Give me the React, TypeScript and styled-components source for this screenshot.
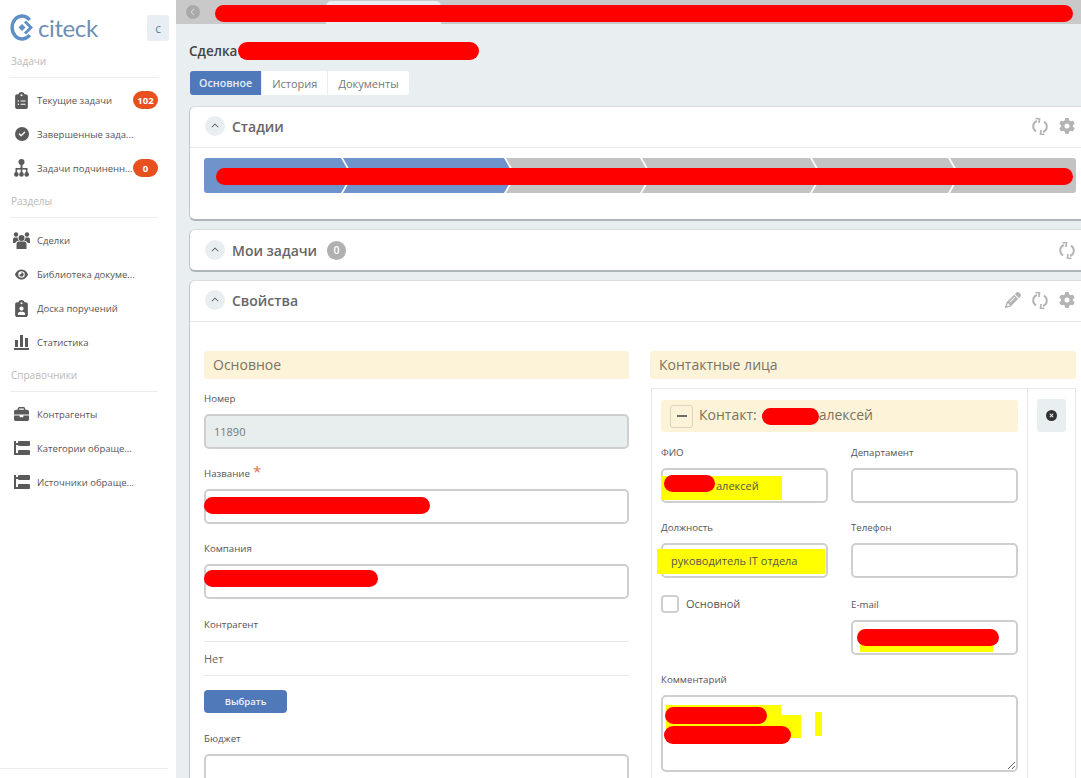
import React from 'react';
import styled, { createGlobalStyle } from 'styled-components';
import {
  FaBriefcase,
  FaCircleCheck,
  FaChevronLeft,
  FaChevronUp,
  FaClipboardList,
  FaClipboardUser,
  FaEye,
  FaGear,
  FaPencil,
  FaCircleXmark,
} from 'react-icons/fa6';

const GlobalStyle = createGlobalStyle`
  html, body {
    margin: 0;
    padding: 0;
    height: 100%;
    overflow: hidden;
    background: #fff;
    font-family: "Open Sans", "Noto Sans", sans-serif;
  }
  * { box-sizing: border-box; }
`;

const LOGO_BLUE = '#5f8fc8';

const StatsIcon = () => (
  <svg width="15" height="16" viewBox="0 0 15 16" fill="#5a5a5a">
    <rect x="1" y="6" width="3" height="7" />
    <rect x="6" y="1" width="3" height="12" />
    <rect x="11" y="4" width="3" height="9" />
    <rect x="0" y="14" width="15" height="2" />
  </svg>
);

const TreeIcon = () => (
  <svg width="16" height="14" viewBox="0 0 16 14" fill="#5a5a5a">
    <rect x="0" y="0" width="2" height="14" />
    <rect x="0" y="2" width="5" height="2" />
    <rect x="0" y="12" width="5" height="2" />
    <rect x="4" y="0" width="12" height="5" rx="1" />
    <rect x="4" y="9" width="12" height="5" rx="1" />
  </svg>
);

const TreeOrgIcon = () => (
  <svg width="15" height="18" viewBox="0 0 15 18" fill="#5a5a5a">
    <circle cx="7.5" cy="3" r="3" />
    <rect x="6.5" y="5" width="2" height="5" />
    <rect x="2" y="9" width="11" height="1.6" />
    <rect x="1.5" y="9" width="1.6" height="5" />
    <rect x="6.7" y="9" width="1.6" height="5" />
    <rect x="11.9" y="9" width="1.6" height="5" />
    <circle cx="2.3" cy="15.4" r="2.3" />
    <circle cx="7.5" cy="15.4" r="2.3" />
    <circle cx="12.7" cy="15.4" r="2.3" />
  </svg>
);

const GroupIcon = () => (
  <svg width="17" height="17" viewBox="0 0 17 17" fill="#5a5a5a">
    <circle cx="8.5" cy="6" r="3" />
    <path d="M3.5 17 V12 C3.5 10 5 9.5 6.5 9.5 H10.5 C12 9.5 13.5 10 13.5 12 V17 Z" />
    <circle cx="3" cy="2.5" r="2.2" />
    <circle cx="14" cy="2.5" r="2.2" />
    <path d="M0 11 V7.5 C0 6 1 5.5 2 5.5 H4.5 C4.7 7 5.2 8 6 8.6 C3.8 9 2.6 9.8 2.5 11 Z" />
    <path d="M17 11 V7.5 C17 6 16 5.5 15 5.5 H12.5 C12.3 7 11.8 8 11 8.6 C13.2 9 14.4 9.8 14.5 11 Z" />
  </svg>
);

const RefreshIcon = () => (
  <svg width="16" height="19" viewBox="0 0 16 19" fill="none" stroke="#b4b4b4" strokeWidth="2">
    <path d="M5 4 C2.5 5 1.2 7 1.2 9.5 C1.2 11.5 2.2 13.2 4 14.5" />
    <path d="M11 15 C13.5 14 14.8 12 14.8 9.5 C14.8 7.5 13.8 5.8 12 4.5" />
    <path d="M3.5 1.5 L7.5 2 L7 6" strokeWidth="1.7" />
    <path d="M12.5 17.5 L8.5 17 L9 13" strokeWidth="1.7" />
  </svg>
);

const Logo = () => (
  <svg width="23" height="27" viewBox="0 0 23 27" fill="none">
    <path d="M19.7 6 A10 11.5 0 1 0 19.7 21" stroke={LOGO_BLUE} strokeWidth="3.4" />
    <path d="M15 7.5 L21 13.5 L15 19.5" stroke={LOGO_BLUE} strokeWidth="3" />
    <path d="M12 10 L15.5 13.5 L12 17 L8.5 13.5 Z" fill={LOGO_BLUE} />
  </svg>
);

const Page = styled.div`
  display: flex;
  width: 1081px;
  height: 778px;
  overflow: hidden;
`;

const Sidebar = styled.aside`
  position: relative;
  flex: 0 0 176px;
  width: 176px;
  min-width: 0;
  padding: 14px 18px 0 10px;
  background: #fff;
`;

const LogoRow = styled.div`
  position: relative;
  display: flex;
  align-items: center;
  gap: 5px;
  height: 27px;
  margin-bottom: 12px;
`;

const LogoText = styled.span`
  font-family: "Lato", "Open Sans", sans-serif;
  font-size: 24px;
  line-height: 27px;
  color: #6f8eb2;
  letter-spacing: -0.4px;
`;

const CollapseButton = styled.div`
  position: absolute;
  top: 1px;
  right: -11px;
  width: 22px;
  height: 26px;
  display: flex;
  align-items: center;
  justify-content: center;
  border-radius: 3px;
  background: #e9eef4;
  color: #6f8299;
  font-size: 12px;
`;

const SectionTitle = styled.div`
  height: 25px;
  margin-top: 8px;
  padding-bottom: 8px;
  padding-left: 1px;
  border-bottom: 1px solid #ececec;
  color: #b9b9b9;
  font-size: 10px;
  line-height: 16px;
`;

const NavList = styled.nav`
  margin-top: 5px;
`;

const NavItem = styled.div`
  display: flex;
  align-items: center;
  height: 34px;
  color: #555;
  font-size: 9.5px;
`;

const NavIcon = styled.span<{ $size: number }>`
  flex: 0 0 27px;
  display: flex;
  align-items: center;
  justify-content: center;
  padding-right: 4px;
  color: #5a5a5a;
  font-size: ${(p) => p.$size}px;
`;

const NavLabel = styled.span`
  flex: 1;
  min-width: 0;
  white-space: nowrap;
`;

const CountBadge = styled.span`
  flex: 0 0 25px;
  display: flex;
  align-items: center;
  justify-content: center;
  height: 18px;
  border-radius: 9px;
  background: #e8501f;
  color: #fff;
  font-size: 9.5px;
  font-weight: 700;
`;

const SidebarFooter = styled.div`
  position: absolute;
  left: 0;
  right: 8px;
  bottom: 9px;
  border-top: 1px solid #ececec;
`;

const Main = styled.main`
  flex: 1;
  min-width: 0;
  background: #e9eef0;
  overflow: hidden;
`;

const TopBar = styled.div`
  position: relative;
  height: 24px;
  background: #c9c9c9;
`;

const ActiveTab = styled.div`
  position: absolute;
  left: 150px;
  top: 1px;
  width: 115px;
  height: 23px;
  border-radius: 5px 5px 0 0;
  background: #e9eef0;
`;

const BackButton = styled.div`
  position: absolute;
  left: 10px;
  top: 5px;
  width: 14px;
  height: 14px;
  display: flex;
  align-items: center;
  justify-content: center;
  border-radius: 50%;
  background: #a9a9a9;
  color: #d8d8d8;
  font-size: 8px;
`;

const Redaction = styled.span<{ $left: number; $top: number; $width: number; $height?: number }>`
  position: absolute;
  z-index: 3;
  left: ${(p) => p.$left}px;
  top: ${(p) => p.$top}px;
  width: ${(p) => p.$width}px;
  height: ${(p) => p.$height ?? 17}px;
  border-radius: 9px;
  background: #ff0000;
`;

const Marker = styled.span<{ $left: number; $top: number; $width: number; $height: number }>`
  position: absolute;
  z-index: 0;
  left: ${(p) => p.$left}px;
  top: ${(p) => p.$top}px;
  width: ${(p) => p.$width}px;
  height: ${(p) => p.$height}px;
  background: #ffff00;
`;

const Content = styled.div`
  margin-right: -8px;
  padding-left: 13px;
`;

const DealTitle = styled.h1`
  position: relative;
  height: 20px;
  margin: 17px 0 0;
  color: #444;
  font-size: 13.5px;
  font-weight: 600;
  line-height: 20px;
`;

const Tabs = styled.div`
  display: flex;
  height: 24px;
  margin: 10px 0 11px 1px;
`;

const Tab = styled.div<{ $active?: boolean }>`
  display: flex;
  align-items: center;
  justify-content: center;
  height: 100%;
  padding: 0 10px;
  margin-right: 1px;
  background: ${(p) => (p.$active ? '#4f79b9' : '#fff')};
  color: ${(p) => (p.$active ? '#e6edf7' : '#777')};
  font-size: ${(p) => (p.$active ? 10.7 : 11)}px;
  font-weight: ${(p) => (p.$active ? 600 : 400)};
  &:first-child { border-radius: 3px 0 0 3px; padding: 0 9px; }
  &:last-child { border-radius: 0 3px 3px 0; }
`;

const Card = styled.section`
  margin-bottom: 8px;
  background: #fff;
  border: 1px solid #d8dcdd;
  border-left-color: #c2c7c9;
  border-bottom: 2px solid #aeb4b8;
  border-radius: 6px 0 0 6px;
  overflow: hidden;
`;

const CardHeader = styled.header<{ $flush?: boolean }>`
  display: flex;
  align-items: center;
  height: ${(p) => (p.$flush ? 40 : 41)}px;
  padding: 0 13px ${(p) => (p.$flush ? 0 : 2)}px 15px;
  border-bottom: ${(p) => (p.$flush ? 'none' : '1px solid #e8e8e8')};
`;

const Toggle = styled.span`
  display: flex;
  align-items: center;
  justify-content: center;
  width: 20px;
  height: 20px;
  margin-right: 7px;
  border-radius: 50%;
  background: #e9eef0;
  color: #666;
  font-size: 8px;
`;

const CardTitle = styled.h2`
  margin: 0;
  color: #666;
  font-size: 14px;
  font-weight: 600;
`;

const ZeroBadge = styled.span`
  display: flex;
  align-items: center;
  justify-content: center;
  width: 19px;
  height: 19px;
  margin-left: 10px;
  border-radius: 50%;
  background: #b0b0b0;
  color: #fff;
  font-size: 10.5px;
  font-weight: 600;
`;

const HeaderTools = styled.div`
  display: flex;
  align-items: center;
  gap: 11px;
  margin-left: auto;
  color: #b4b4b4;
  font-size: 16px;
`;

const StagesBody = styled.div`
  padding: 10px 12px 26px 14px;
`;

const StageBar = styled.div`
  position: relative;
  display: flex;
  height: 35px;
  border-radius: 3px;
  overflow: hidden;
`;

const Stage = styled.div<{ $width: number; $done?: boolean; $first?: boolean; $last?: boolean }>`
  flex: ${(p) => (p.$last ? 1 : `0 0 ${p.$width}px`)};
  margin-left: ${(p) => (p.$first ? 0 : -8)}px;
  background: ${(p) => (p.$done ? '#6f93cb' : '#c3c3c3')};
  clip-path: ${(p) =>
    p.$first
      ? 'polygon(0 0, calc(100% - 10px) 0, 100% 50%, calc(100% - 10px) 100%, 0 100%)'
      : p.$last
        ? 'polygon(0 0, 100% 0, 100% 100%, 0 100%, 10px 50%)'
        : 'polygon(0 0, calc(100% - 10px) 0, 100% 50%, calc(100% - 10px) 100%, 0 100%, 10px 50%)'};
`;

const PropsBody = styled.div`
  display: grid;
  grid-template-columns: 425px 426px;
  column-gap: 21px;
  padding: 29px 0 0 14px;
`;

const SectionBand = styled.div`
  position: relative;
  display: flex;
  align-items: center;
  height: 28px;
  padding: 0 0 2px 9px;
  border-radius: 3px;
  background: #fdf3d9;
  color: #79745f;
  font-size: 14px;
  font-weight: 500;
`;

const Column = styled.div`
  min-width: 0;
`;

const FieldGroup = styled.div`
  margin-top: 11px;
  margin-bottom: 16px;
`;

const Group = styled.div`
  margin-bottom: 16px;
`;

const EmailGroup = styled(Group)`
  margin-top: 2px;
`;

const Label = styled.div`
  height: 16px;
  margin-bottom: 8px;
  padding-top: 1px;
  color: #555;
  font-size: 9.7px;
  line-height: 16px;
`;

const Required = styled.span`
  margin-left: 3px;
  color: #e2734f;
  font-size: 15px;
  line-height: 10px;
`;

const Input = styled.div<{ $disabled?: boolean; $pad?: number }>`
  position: relative;
  display: flex;
  align-items: center;
  height: 35px;
  padding-left: ${(p) => p.$pad ?? 8}px;
  border: 2px solid #cfcfcf;
  border-radius: 5px;
  background: ${(p) => (p.$disabled ? '#e8edee' : '#fff')};
  color: ${(p) => (p.$disabled ? '#777' : '#555')};
  font-size: 11px;
`;

const InputText = styled.span`
  position: relative;
  z-index: 1;
`;

const StaticValue = styled.div`
  height: 35px;
  margin-top: 8px;
  margin-bottom: 14px;
  border-top: 1px solid #e8e8e8;
  border-bottom: 1px solid #e8e8e8;
  color: #666;
  font-size: 11px;
  line-height: 33px;
`;

const ContractorLabel = styled(Label)`
  height: 18px;
  margin-bottom: 0;
  padding-top: 2px;
`;

const PrimaryButton = styled.button`
  display: block;
  width: 83px;
  height: 23px;
  margin-bottom: 17px;
  border: none;
  border-radius: 4px;
  background: #4f79b9;
  color: #eef3fa;
  font-family: inherit;
  font-size: 9.5px;
  font-weight: 600;
`;

const ContactBox = styled.div`
  display: grid;
  grid-template-columns: 376px 1fr;
  height: 400px;
  margin: 9px 0 0 1px;
  border: 1px solid #e8e8e8;
`;

const ContactMain = styled.div`
  padding: 11px 9px 0 9px;
  border-right: 1px solid #e8e8e8;
`;

const ContactSide = styled.div`
  padding: 10px 0 0 9px;
`;

const RemoveButton = styled.div`
  display: flex;
  align-items: center;
  justify-content: center;
  width: 29px;
  height: 33px;
  border-radius: 3px;
  background: #e9eef0;
  color: #333;
  font-size: 11px;
`;

const ContactHeader = styled.div`
  position: relative;
  display: flex;
  align-items: center;
  height: 32px;
  margin-bottom: 12px;
  padding: 0 0 4px 9px;
  border-radius: 3px;
  background: #fdf3d9;
  color: #79745f;
  font-size: 14px;
  font-weight: 500;
`;

const ContactName = styled.span`
  margin-left: auto;
  margin-right: 145px;
`;

const MinusBox = styled.span`
  display: flex;
  align-items: center;
  justify-content: center;
  width: 23px;
  height: 23px;
  margin: 4px 6px 0 0;
  border: 1px solid #d9d4c2;
  border-radius: 3px;
  &::before {
    content: '';
    width: 10px;
    height: 2px;
    background: #6b6b6b;
  }
`;

const ContactGrid = styled.div`
  display: grid;
  grid-template-columns: 167px 167px;
  column-gap: 23px;
`;

const CheckRow = styled.label`
  display: flex;
  align-items: flex-start;
  gap: 7px;
  margin-top: 1px;
  color: #555;
  font-size: 11px;
  line-height: 18px;
`;

const CheckBox = styled.span`
  width: 18px;
  height: 18px;
  border: 2px solid #cfcfcf;
  border-radius: 4px;
`;

const CommentWrap = styled.div`
  position: relative;
  width: 357px;
  height: 77px;
`;

const Comment = styled.textarea`
  position: relative;
  z-index: 1;
  display: block;
  width: 100%;
  height: 100%;
  border: 2px solid #cfcfcf;
  border-radius: 5px;
  background: transparent;
  outline: none;
  resize: both;
`;

const sections = [
  {
    title: 'Задачи',
    items: [
      { label: 'Текущие задачи', icon: <FaClipboardList />, size: 17, count: 102 },
      { label: 'Завершенные зада...', icon: <FaCircleCheck />, size: 14 },
      { label: 'Задачи подчиненн...', icon: <TreeOrgIcon />, size: 15, count: 0 },
    ],
  },
  {
    title: 'Разделы',
    items: [
      { label: 'Сделки', icon: <GroupIcon />, size: 17 },
      { label: 'Библиотека докуме...', icon: <FaEye />, size: 13 },
      { label: 'Доска поручений', icon: <FaClipboardUser />, size: 17 },
      { label: 'Статистика', icon: <StatsIcon />, size: 15 },
    ],
  },
  {
    title: 'Справочники',
    items: [
      { label: 'Контрагенты', icon: <FaBriefcase />, size: 15 },
      { label: 'Категории обраще...', icon: <TreeIcon />, size: 15 },
      { label: 'Источники обраще...', icon: <TreeIcon />, size: 15 },
    ],
  },
];

const stages = [
  { width: 147, done: true },
  { width: 171, done: true },
  { width: 144 },
  { width: 178 },
  { width: 146 },
  { width: 0 },
];

const App = () => {
  return (
    <Page>
      <GlobalStyle />
      <Sidebar>
        <LogoRow>
          <Logo />
          <LogoText>citeck</LogoText>
          <CollapseButton>c</CollapseButton>
        </LogoRow>
        {sections.map((section) => (
          <div key={section.title}>
            <SectionTitle>{section.title}</SectionTitle>
            <NavList>
              {section.items.map((item) => (
                <NavItem key={item.label}>
                  <NavIcon $size={item.size}>{item.icon}</NavIcon>
                  <NavLabel>{item.label}</NavLabel>
                  {item.count !== undefined && <CountBadge>{item.count}</CountBadge>}
                </NavItem>
              ))}
            </NavList>
          </div>
        ))}
        <SidebarFooter />
      </Sidebar>

      <Main>
        <TopBar>
          <ActiveTab />
          <BackButton>
            <FaChevronLeft />
          </BackButton>
          <Redaction $left={39} $top={5} $width={858} />
        </TopBar>
        <Content>
          <DealTitle>
            Сделка
            <Redaction $left={49} $top={1} $width={241} $height={18} />
          </DealTitle>
          <Tabs>
            <Tab $active>Основное</Tab>
            <Tab>История</Tab>
            <Tab>Документы</Tab>
          </Tabs>

          <Card>
            <CardHeader>
              <Toggle>
                <FaChevronUp />
              </Toggle>
              <CardTitle>Стадии</CardTitle>
              <HeaderTools>
                <RefreshIcon />
                <FaGear />
              </HeaderTools>
            </CardHeader>
            <StagesBody>
              <StageBar>
                {stages.map((stage, i) => (
                  <Stage
                    key={i}
                    $width={stage.width}
                    $done={stage.done}
                    $first={i === 0}
                    $last={i === stages.length - 1}
                  />
                ))}
                <Redaction $left={12} $top={10} $width={857} />
              </StageBar>
            </StagesBody>
          </Card>

          <Card>
            <CardHeader $flush>
              <Toggle>
                <FaChevronUp />
              </Toggle>
              <CardTitle>Мои задачи</CardTitle>
              <ZeroBadge>0</ZeroBadge>
              <HeaderTools>
                <RefreshIcon />
              </HeaderTools>
            </CardHeader>
          </Card>

          <Card>
            <CardHeader>
              <Toggle>
                <FaChevronUp />
              </Toggle>
              <CardTitle>Свойства</CardTitle>
              <HeaderTools>
                <FaPencil />
                <RefreshIcon />
                <FaGear />
              </HeaderTools>
            </CardHeader>
            <PropsBody>
              <Column>
                <SectionBand>Основное</SectionBand>
                <FieldGroup>
                  <Label>Номер</Label>
                  <Input $disabled>11890</Input>
                </FieldGroup>
                <Group>
                  <Label>
                    Название<Required>*</Required>
                  </Label>
                  <Input>
                    <Redaction $left={-2} $top={6} $width={226} />
                  </Input>
                </Group>
                <Group>
                  <Label>Компания</Label>
                  <Input>
                    <Redaction $left={-2} $top={4} $width={174} />
                  </Input>
                </Group>
                <ContractorLabel>Контрагент</ContractorLabel>
                <StaticValue>Нет</StaticValue>
                <PrimaryButton>Выбрать</PrimaryButton>
                <Group>
                  <Label>Бюджет</Label>
                  <Input />
                </Group>
              </Column>

              <Column>
                <SectionBand>Контактные лица</SectionBand>
                <ContactBox>
                  <ContactMain>
                    <ContactHeader>
                      <MinusBox />
                      Контакт:
                      <Redaction $left={101} $top={8} $width={57} />
                      <ContactName>алексей</ContactName>
                    </ContactHeader>
                    <ContactGrid>
                      <Group>
                        <Label>ФИО</Label>
                        <Input $pad={53}>
                          <Marker $left={-2} $top={6} $width={121} $height={24} />
                          <Redaction $left={1} $top={5} $width={51} />
                          <InputText>алексей</InputText>
                        </Input>
                      </Group>
                      <Group>
                        <Label>Департамент</Label>
                        <Input />
                      </Group>
                      <Group>
                        <Label>Должность</Label>
                        <Input>
                          <Marker $left={-6} $top={4} $width={168} $height={25} />
                          <InputText>руководитель IT отдела</InputText>
                        </Input>
                      </Group>
                      <Group>
                        <Label>Телефон</Label>
                        <Input />
                      </Group>
                      <CheckRow>
                        <CheckBox />
                        Основной
                      </CheckRow>
                      <EmailGroup>
                        <Label>E-mail</Label>
                        <Input>
                          <Marker $left={7} $top={8} $width={133} $height={22} />
                          <Redaction $left={4} $top={7} $width={142} />
                        </Input>
                      </EmailGroup>
                    </ContactGrid>
                    <Label>Комментарий</Label>
                    <CommentWrap>
                      <Marker $left={5} $top={10} $width={115} $height={17} />
                      <Marker $left={5} $top={20} $width={135} $height={23} />
                      <Marker $left={154} $top={17} $width={7} $height={24} />
                      <Redaction $left={4} $top={12} $width={102} />
                      <Redaction $left={3} $top={31} $width={127} $height={18} />
                      <Comment readOnly />
                    </CommentWrap>
                  </ContactMain>
                  <ContactSide>
                    <RemoveButton>
                      <FaCircleXmark />
                    </RemoveButton>
                  </ContactSide>
                </ContactBox>
              </Column>
            </PropsBody>
          </Card>
        </Content>
      </Main>
    </Page>
  );
};

export default App;
